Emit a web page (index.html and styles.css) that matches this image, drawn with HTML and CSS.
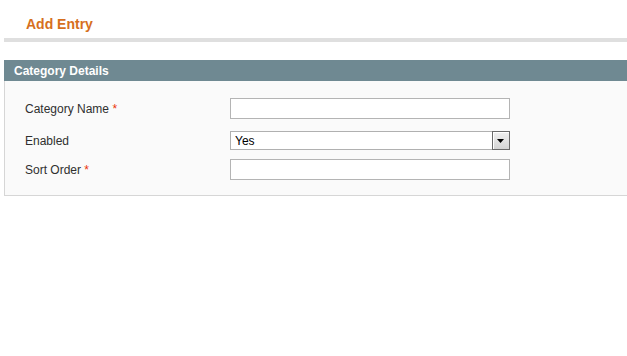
FILE: index.html
```html
<!DOCTYPE html>
<html>
<head>
<meta charset="utf-8">
<link rel="stylesheet" href="styles.css">
</head>
<body>
<div class="page">
  <div class="content-header">
    <h3 class="title">Add Entry</h3>
  </div>
  <div class="section">
    <div class="section-head">Category Details</div>
    <div class="fieldset">
      <div class="row">
        <label class="label">Category Name <span class="req">*</span></label>
        <div class="field"><input class="input" type="text"></div>
      </div>
      <div class="row row-select">
        <label class="label">Enabled</label>
        <div class="field select-wrap">
          <select class="select"><option>Yes</option><option>No</option></select>
          <span class="select-btn"><svg width="8" height="4" viewBox="0 0 8 4"><path d="M0 0H7L3.5 4Z" fill="#000"/></svg></span>
        </div>
      </div>
      <div class="row">
        <label class="label">Sort Order <span class="req">*</span></label>
        <div class="field"><input class="input" type="text"></div>
      </div>
    </div>
  </div>
</div>
</body>
</html>
```
FILE: styles.css
```css
html, body {
  margin: 0;
  padding: 0;
  background: #fff;
  overflow: hidden;
}
body {
  font-family: "Liberation Sans", Arial, sans-serif;
  font-size: 12px;
  color: #2f2f2f;
}
.page {
  padding-left: 4px;
}
.content-header {
  border-bottom: 4px solid #dfdfdf;
  padding: 15px 0 0 22px;
  height: 23px;
}
.title {
  margin: 0;
  font-size: 14px;
  line-height: 18px;
  font-weight: bold;
  color: #d66f1e;
}
.section {
  margin-top: 18px;
}
.section-head {
  background: #6f8992;
  color: #fff;
  font-weight: bold;
  font-size: 12px;
  line-height: 20px;
  height: 20px;
  padding: 1px 0 0 10px;
}
.fieldset {
  background: #fafafa;
  border-left: 1px solid #d6d6d6;
  border-bottom: 1px solid #d6d6d6;
  padding: 17px 0 15px 20px;
  display: flex;
  flex-direction: column;
}
.row {
  display: flex;
  align-items: center;
}
.row-select {
  margin: 12px 0 9px;
}
.label {
  width: 205px;
  flex: none;
}
.req {
  color: #eb340a;
}
.field {
  width: 280px;
}
.input {
  display: block;
  box-sizing: border-box;
  width: 280px;
  height: 21px;
  margin: 0;
  border: 1px solid #b4b4b4;
  background: #fff;
  padding: 0 3px;
  font: 12px "Liberation Sans", Arial, sans-serif;
  outline: none;
}
.select-wrap {
  position: relative;
  height: 19px;
}
.select {
  display: block;
  appearance: none;
  -webkit-appearance: none;
  box-sizing: border-box;
  width: 280px;
  height: 19px;
  margin: 0;
  border: 1px solid #b0b0b0;
  border-radius: 0;
  background: #fff;
  padding: 0 0 0 4px;
  font: 12px "Liberation Sans", Arial, sans-serif;
  color: #000;
  outline: none;
}
.select-btn {
  position: absolute;
  right: 0;
  top: 0;
  box-sizing: border-box;
  width: 18px;
  height: 19px;
  border: 1px solid #6a6a6a;
  box-shadow: inset 1px 1px 0 #fff;
  background: linear-gradient(#f0f0f0, #d4d4d4);
  display: flex;
  align-items: center;
  justify-content: center;
  padding-top: 1px;
}
```
